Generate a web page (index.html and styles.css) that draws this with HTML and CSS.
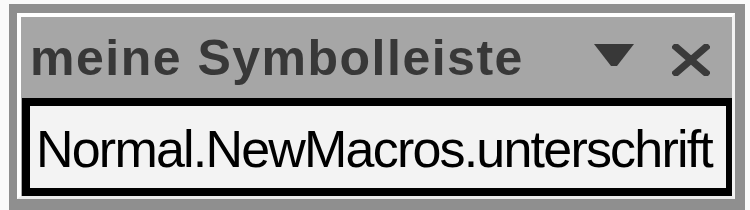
FILE: index.html
```html
<!DOCTYPE html>
<html lang="de">
<head>
<meta charset="utf-8">
<link rel="stylesheet" href="styles.css">
</head>
<body>
<div class="frame">
  <div class="panel">
    <div class="titlebar">
      <span class="title">meine Symbolleiste</span>
      <svg class="icon-drop" width="40" height="22" viewBox="0 0 40 22">
        <polygon points="0,0 40,0 23,22 17,22" fill="#383838"/>
      </svg>
      <svg class="icon-close" width="38" height="32" viewBox="0 0 38 32">
        <path d="M4,3 L34,29 M34,3 L4,29" stroke="#3a3a3a" stroke-width="7" stroke-linecap="square" fill="none"/>
      </svg>
    </div>
    <div class="box">
      <span class="macro">Normal.NewMacros.unterschrift</span>
    </div>
  </div>
</div>
</body>
</html>
```
FILE: styles.css
```css
html, body {
  margin: 0;
  padding: 0;
  background: #fafafa;
  overflow: hidden;
}
.frame {
  margin: 4px 5px 0 9px;
  background: #8f8f8f;
  padding: 9px 10px 11px 8px;
}
.panel {
  background: #a6a6a6;
  border-left: 4px solid #ffffff;
  border-top: 4px solid #ffffff;
  border-right: 3px solid #f2f2f2;
  border-bottom: 3px solid #ececec;
}
.titlebar {
  height: 81px;
  display: flex;
  align-items: center;
  padding-left: 9px;
}
.title {
  font-family: "Liberation Sans", Arial, sans-serif;
  font-weight: bold;
  font-size: 50px;
  letter-spacing: 1.5px;
  color: #383838;
  line-height: 1;
  flex: 1;
}
.icon-drop {
  margin-right: 38px;
  margin-top: -5px;
}
.icon-close {
  margin-right: 22px;
  margin-top: 5px;
}
.box {
  margin-left: 1px;
  height: 82px;
  border-style: solid;
  border-color: #000;
  border-width: 8px 6px 8px 8px;
  background: #f3f3f3;
  display: flex;
  align-items: center;
  padding-left: 6px;
}
.macro {
  font-family: "Liberation Sans", Arial, sans-serif;
  font-size: 52px;
  letter-spacing: -1.8px;
  color: #000;
  line-height: 1;
  margin-top: 4px;
}
```
